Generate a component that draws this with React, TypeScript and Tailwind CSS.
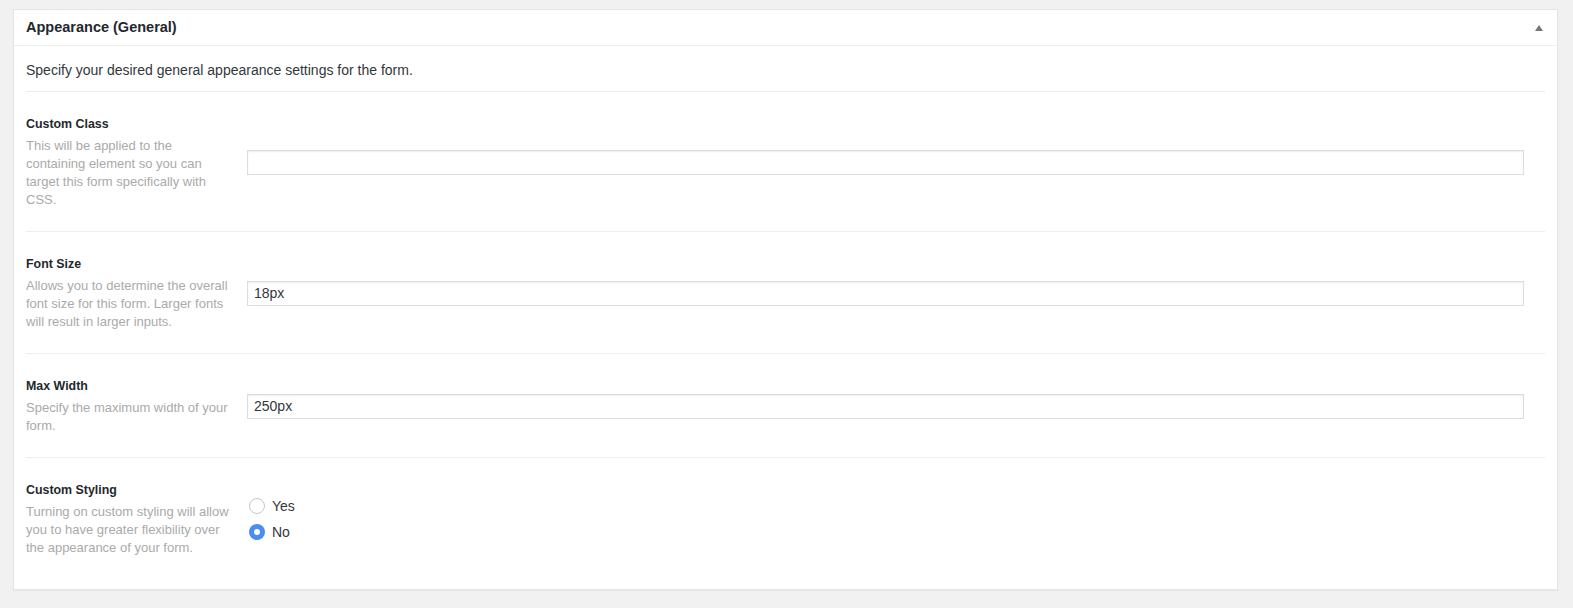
import React from "react";

const font = { fontFamily: '"Liberation Sans", Arial, sans-serif' };

function Row({
  label,
  desc,
  last,
  children,
}: {
  label: string;
  desc: string;
  last?: boolean;
  children: React.ReactNode;
}) {
  return (
    <div
      className={`flex items-center pt-[23px] pb-[22px] ${
        last ? "" : "border-b border-[#eeeeee]"
      }`}
    >
      <div className="w-[221px] shrink-0 pr-[16px]">
        <div className="text-[12.4px] font-bold leading-[18px] text-[#23282d] mb-[4px]">
          {label}
        </div>
        <div className="text-[13px] leading-[18px] text-[#aaaaaa]">{desc}</div>
      </div>
      <div className="flex-1 min-w-0">{children}</div>
    </div>
  );
}

function TextInput({ value }: { value: string }) {
  return (
    <div className="mr-[21px] h-[25px] border border-[#dddddd] bg-white shadow-[inset_0_1px_2px_rgba(0,0,0,0.07)] flex items-center px-[6px] text-[14px] text-[#32373c]">
      {value}
    </div>
  );
}

function Radio({ checked, label }: { checked?: boolean; label: string }) {
  return (
    <div className="flex items-center h-[26px] pl-[2px]">
      {checked ? (
        <span className="w-[16px] h-[16px] rounded-full bg-[#4a8ff0] flex items-center justify-center">
          <span className="w-[6px] h-[6px] rounded-full bg-white" />
        </span>
      ) : (
        <span className="w-[16px] h-[16px] rounded-full border border-[#c4c7ca] bg-white" />
      )}
      <span className="ml-[7px] text-[14px] text-[#32373c]">{label}</span>
    </div>
  );
}

export default function App() {
  return (
    <div className="h-[608px] overflow-hidden bg-[#f1f1f1] pt-[9px] pl-[13px] pr-[15px]" style={font}>
      <div className="bg-white border border-[#e5e5e5] shadow-[0_1px_1px_rgba(0,0,0,0.04)]">
        <div className="h-[36px] border-b border-[#eeeeee] flex items-center">
          <h2 className="flex-1 pl-[12px] text-[14.5px] font-bold text-[#23282d]">
            Appearance (General)
          </h2>
          <div className="w-[36px] h-full flex items-center justify-center">
            <svg width="8" height="6" viewBox="0 0 8 6">
              <path d="M4 0 L8 6 L0 6 Z" fill="#72777c" />
            </svg>
          </div>
        </div>
        <div className="px-[12px] pb-[10px]">
          <p className="pt-[14px] pb-[11px] text-[14px] leading-[20px] text-[#32373c] border-b border-[#eeeeee]">
            Specify your desired general appearance settings for the form.
          </p>
          <Row
            label="Custom Class"
            desc="This will be applied to the containing element so you can target this form specifically with CSS."
          >
            <TextInput value="" />
          </Row>
          <Row
            label="Font Size"
            desc="Allows you to determine the overall font size for this form. Larger fonts will result in larger inputs."
          >
            <TextInput value="18px" />
          </Row>
          <Row label="Max Width" desc="Specify the maximum width of your form.">
            <TextInput value="250px" />
          </Row>
          <Row
            label="Custom Styling"
            desc="Turning on custom styling will allow you to have greater flexibility over the appearance of your form."
            last
          >
            <div>
              <Radio label="Yes" />
              <Radio label="No" checked />
            </div>
          </Row>
        </div>
      </div>
    </div>
  );
}
